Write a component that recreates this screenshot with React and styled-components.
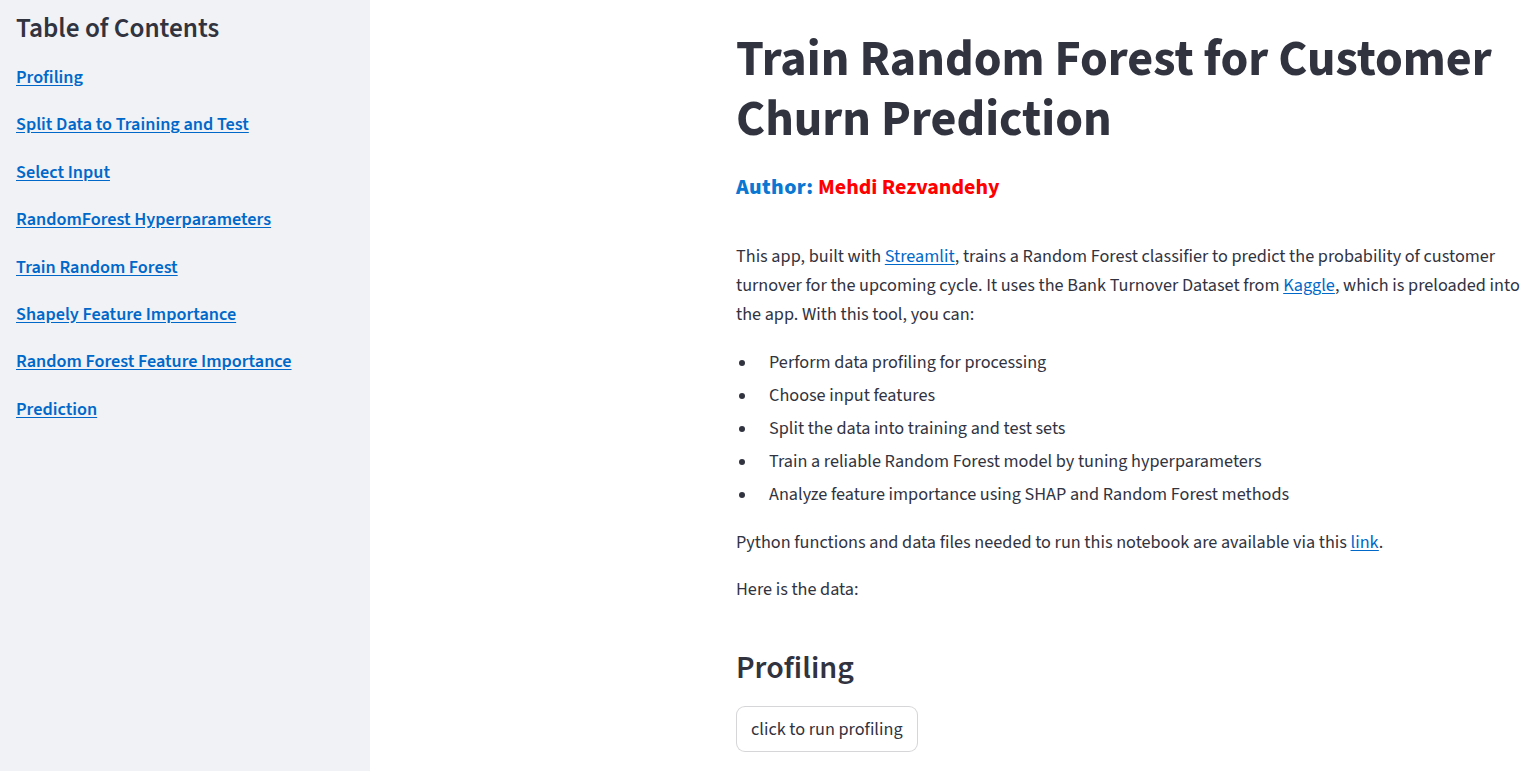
import React from 'react'
import styled, { createGlobalStyle } from 'styled-components'

const GlobalStyle = createGlobalStyle`
  html, body {
    margin: 0;
    padding: 0;
    overflow: hidden;
    background: #ffffff;
  }
  body {
    font-family: "Source Sans 3", "Source Sans Pro", Lato, sans-serif;
    color: #31333f;
    -webkit-font-smoothing: antialiased;
  }
  * {
    box-sizing: border-box;
  }
`

const Layout = styled.div`
  display: grid;
  grid-template-columns: 370px 1fr;
  height: 100vh;
  width: 100vw;
  overflow: hidden;
`

const Sidebar = styled.aside`
  background: #f0f2f6;
  padding: 12px 16px 0 16px;
`

const SidebarTitle = styled.h2`
  margin: 0;
  font-size: 27.2px;
  line-height: 34px;
  font-weight: 600;
  color: #31333f;
`

const TocList = styled.nav`
  display: flex;
  flex-direction: column;
  gap: 18.4px;
  margin-top: 17px;
`

const TocLink = styled.a`
  font-size: 18.2px;
  line-height: 29px;
  font-weight: 600;
  color: #0068c9;
  text-decoration: underline;
  text-underline-offset: 2px;
  align-self: flex-start;
`

const Main = styled.main`
  padding: 30px 0 0 366px;
  overflow: hidden;
`

const Content = styled.div`
  width: 793px;
`

const Title = styled.h1`
  margin: 0;
  font-size: 50.2px;
  line-height: 60px;
  font-weight: 700;
  color: #31333f;
`

const Author = styled.div`
  margin-top: 22px;
  font-size: 22px;
  line-height: 30px;
  font-weight: 700;
`

const AuthorLabel = styled.span`
  color: #0a77d2;
  font-weight: 800;
  letter-spacing: 0.4px;
`

const AuthorName = styled.span`
  color: #ff0000;
`

const Paragraph = styled.p`
  margin: ${p => p.$top || 0}px 0 0 0;
  font-size: 18.2px;
  line-height: 29.1px;
`

const TextLink = styled.a`
  color: #0068c9;
  text-decoration: underline;
  text-underline-offset: 2px;
`

const Bullets = styled.ul`
  margin: 18.5px 0 0 0;
  padding: 0;
  list-style: none;
  display: flex;
  flex-direction: column;
  gap: 4px;
`

const Bullet = styled.li`
  display: flex;
  align-items: center;
  font-size: 18.2px;
  line-height: 29px;

  &::before {
    content: '';
    flex: 0 0 6px;
    height: 6px;
    margin: 2px 24px 0 3px;
    border-radius: 50%;
    background: #31333f;
  }
`

const SectionTitle = styled.h3`
  margin: 45.5px 0 0 0;
  font-size: 32px;
  line-height: 38.4px;
  font-weight: 600;
  color: #31333f;
`

const Button = styled.button`
  margin-top: 18px;
  height: 46px;
  padding: 0 14px;
  background: #ffffff;
  border: 1px solid rgba(49, 51, 63, 0.2);
  border-radius: 9px;
  font-family: inherit;
  font-size: 18.2px;
  color: #31333f;
  cursor: pointer;
`

const tocItems = [
  'Profiling',
  'Split Data to Training and Test',
  'Select Input',
  'RandomForest Hyperparameters',
  'Train Random Forest',
  'Shapely Feature Importance',
  'Random Forest Feature Importance',
  'Prediction',
]

const features = [
  'Perform data profiling for processing',
  'Choose input features',
  'Split the data into training and test sets',
  'Train a reliable Random Forest model by tuning hyperparameters',
  'Analyze feature importance using SHAP and Random Forest methods',
]

const App = () => {
  return (
    <Layout>
      <GlobalStyle />
      <Sidebar>
        <SidebarTitle>Table of Contents</SidebarTitle>
        <TocList>
          {tocItems.map(item => (
            <TocLink key={item} href={'#' + item.toLowerCase().replace(/ /g, '-')}>{item}</TocLink>
          ))}
        </TocList>
      </Sidebar>
      <Main>
        <Content>
          <Title>Train Random Forest for Customer Churn Prediction</Title>
          <Author>
            <AuthorLabel>Author:</AuthorLabel> <AuthorName>Mehdi Rezvandehy</AuthorName>
          </Author>
          <Paragraph $top={40}>
            This app, built with <TextLink href="#">Streamlit</TextLink>, trains a Random Forest classifier to predict the probability of customer turnover for the upcoming cycle. It uses the Bank Turnover Dataset from <TextLink href="#">Kaggle</TextLink>, which is preloaded into the app. With this tool, you can:
          </Paragraph>
          <Bullets>
            {features.map(f => <Bullet key={f}>{f}</Bullet>)}
          </Bullets>
          <Paragraph $top={19}>
            Python functions and data files needed to run this notebook are available via this <TextLink href="#">link</TextLink>.
          </Paragraph>
          <Paragraph $top={18}>Here is the data:</Paragraph>
          <SectionTitle>Profiling</SectionTitle>
          <Button>click to run profiling</Button>
        </Content>
      </Main>
    </Layout>
  )
}

export default App
